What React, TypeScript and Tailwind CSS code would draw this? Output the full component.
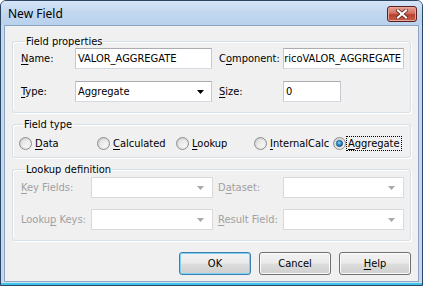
import React from "react";

const F = "font-['DejaVu_Sans_Condensed','DejaVu_Sans',sans-serif] text-[11px] leading-[13px]";

function U({ children }: { children: React.ReactNode }) {
  return <span className="underline decoration-1 underline-offset-[2px]">{children}</span>;
}

function Label({ children, w, dis }: { children: React.ReactNode; w: string; dis?: boolean }) {
  return (
    <div className={`${w} shrink-0 flex items-center h-full ${dis ? "text-[#a0a0a0]" : "text-black"}`}>{children}</div>
  );
}

const boxBorder = "border border-[#abadb3] border-l-[#c4c8d0] border-r-[#c4c8d0] border-b-[#d5d9e0] bg-white";

function Arrow({ dis }: { dis?: boolean }) {
  return (
    <svg width="7" height="4" viewBox="0 0 7 4" className="shrink-0">
      <path d="M0 0 H7 L3.5 4 Z" fill={dis ? "#a9a9a9" : "#000"} />
    </svg>
  );
}

function Radio({ checked, id }: { checked?: boolean; id: string }) {
  return (
    <svg width="13" height="13" viewBox="0 0 13 13" className="shrink-0">
      <defs>
        <linearGradient id={`o${id}`} x1="0" y1="0" x2="1" y2="1">
          <stop offset="0" stopColor="#c9c9c9" />
          <stop offset="1" stopColor="#f6f6f6" />
        </linearGradient>
        <linearGradient id={`i${id}`} x1="0" y1="0" x2="1" y2="1">
          <stop offset="0" stopColor="#e0e0e0" />
          <stop offset="1" stopColor="#fbfbfb" />
        </linearGradient>
        <radialGradient id={`d${id}`} cx="0.45" cy="0.4" r="0.6">
          <stop offset="0" stopColor="#8fdcff" />
          <stop offset="0.5" stopColor="#2b8fd0" />
          <stop offset="1" stopColor="#1a4d78" />
        </radialGradient>
      </defs>
      <circle cx="6.5" cy="6.5" r="6" fill={`url(#o${id})`} stroke="#8e8f8f" strokeWidth="1" />
      <circle cx="6.5" cy="6.5" r="4" fill={`url(#i${id})`} />
      {checked && <circle cx="6.5" cy="6.5" r="3.2" fill={`url(#d${id})`} stroke="#1d4f7c" strokeWidth="0.6" />}
    </svg>
  );
}

function Btn({ children, def }: { children: React.ReactNode; def?: boolean }) {
  return (
    <div
      className={`w-[72px] h-[23px] rounded-[3px] border flex items-center justify-center text-black bg-[linear-gradient(#f2f2f2_0%,#ebebeb_48%,#dddddd_52%,#cfcfcf_100%)] ${
        def ? "border-[#3c7fb1] shadow-[inset_0_0_0_1px_#7fd0f2]" : "border-[#707070] shadow-[inset_0_0_0_1px_#fbfbfb]"
      }`}
    >
      {children}
    </div>
  );
}

function Group({ title, children, cls }: { title: string; children: React.ReactNode; cls: string }) {
  return (
    <fieldset className={`border border-[#d5dfe5] rounded-[3px] shadow-[inset_1px_1px_0_#ffffff,1px_1px_0_#ffffff] ${cls}`}>
      <legend className="ml-[4px] px-[1px] h-[13px] leading-[13px] text-black">{title}</legend>
      {children}
    </fieldset>
  );
}

export default function App() {
  return (
    <div className={`w-[423px] h-[286px] flex flex-col border border-[#2b4563] rounded-t-[6px] bg-[#c4d8ef] overflow-hidden ${F}`}>
      {/* title bar */}
      <div className="h-[24px] shrink-0 flex items-center pl-[7px] pr-[5px] bg-[linear-gradient(#d6e5f6_0%,#c3d8f0_45%,#b9d1ed_100%)]">
        <div className="font-['Noto_Sans',sans-serif] text-[12px] leading-[16px] text-black pt-[2px]">New Field</div>
        <div className="ml-auto w-[30px] h-[16px] mt-[2px] rounded-[3px] border border-[#5b1f1f] flex items-center justify-center bg-[linear-gradient(#e8a093_0%,#d0705f_45%,#b8402e_55%,#c9604a_100%)] shadow-[inset_0_0_0_1px_#e7a598]">
          <svg width="12" height="10" viewBox="0 0 12 10">
            <path d="M2 1.5 L10 8.5 M10 1.5 L2 8.5" stroke="#5a1a12" strokeWidth="3.6" strokeLinecap="square" />
            <path d="M2 1.5 L10 8.5 M10 1.5 L2 8.5" stroke="#ffffff" strokeWidth="2.2" strokeLinecap="square" />
          </svg>
        </div>
      </div>
      {/* client */}
      <div className="flex-1 mx-[3px] border border-[#8ba4c3] bg-[#f0f0f0] flex flex-col px-[7px] pt-[9px]">
        <Group title="Field properties" cls="pl-[8px] pb-[10px]">
          <div className="flex h-[21px]">
            <Label w="w-[54px]">
              <span><U>N</U>ame:</span>
            </Label>
            <div className={`w-[137px] h-[21px] ${boxBorder} flex items-center pl-[2px]`}>VALOR_AGGREGATE</div>
            <div className="w-[7px]" />
            <Label w="w-[64px]">
              <span>C<U>o</U>mponent:</span>
            </Label>
            <div className={`w-[121px] h-[21px] ${boxBorder} flex items-center justify-end pr-[2px] overflow-hidden whitespace-nowrap`}>ricoVALOR_AGGREGATE</div>
          </div>
          <div className="flex h-[21px] mt-[12px]">
            <Label w="w-[54px]">
              <span><U>T</U>ype:</span>
            </Label>
            <div className={`w-[137px] h-[21px] ${boxBorder} flex items-center pl-[2px] pr-[7px]`}>
              <span>Aggregate</span>
              <span className="ml-auto"><Arrow /></span>
            </div>
            <div className="w-[7px]" />
            <Label w="w-[64px]">
              <span><U>S</U>ize:</span>
            </Label>
            <div className={`w-[58px] h-[21px] ${boxBorder} flex items-center pl-[2px]`}>0</div>
          </div>
        </Group>

        <Group title="Field type" cls="mt-[5px] pl-[6px] pt-[5px] pb-[6px]">
          <div className="flex h-[15px] items-center">
            <div className="w-[78px] flex items-center gap-[3px]"><Radio id="a" /><span><U>D</U>ata</span></div>
            <div className="w-[79px] flex items-center gap-[3px]"><Radio id="b" /><span><U>C</U>alculated</span></div>
            <div className="w-[78px] flex items-center gap-[3px]"><Radio id="c" /><span><U>L</U>ookup</span></div>
            <div className="w-[79px] flex items-center gap-[3px]"><Radio id="d" /><span><U>I</U>nternalCalc</span></div>
            <div className="flex items-center gap-[1px]">
              <Radio id="e" checked />
              <span className="outline outline-1 outline-dotted outline-black px-[1px]"><U>A</U>ggregate</span>
            </div>
          </div>
        </Group>

        <Group title="Lookup definition" cls="mt-[5px] pl-[8px] pt-[1px] pb-[10px]">
          <div className="flex h-[21px]">
            <Label w="w-[70px]" dis>
              <span><U>K</U>ey Fields:</span>
            </Label>
            <div className={`w-[122px] h-[21px] border border-[#d9d9d9] bg-white flex items-center justify-end pr-[8px]`}>
              <Arrow dis />
            </div>
            <div className="w-[5px]" />
            <Label w="w-[65px]" dis>
              <span>D<U>a</U>taset:</span>
            </Label>
            <div className={`w-[121px] h-[21px] border border-[#d9d9d9] bg-white flex items-center justify-end pr-[8px]`}>
              <Arrow dis />
            </div>
          </div>
          <div className="flex h-[21px] mt-[11px]">
            <Label w="w-[70px]" dis>
              <span>Looku<U>p</U> Keys:</span>
            </Label>
            <div className={`w-[122px] h-[21px] border border-[#d9d9d9] bg-white flex items-center justify-end pr-[8px]`}>
              <Arrow dis />
            </div>
            <div className="w-[5px]" />
            <Label w="w-[65px]" dis>
              <span><U>R</U>esult Field:</span>
            </Label>
            <div className={`w-[121px] h-[21px] border border-[#d9d9d9] bg-white flex items-center justify-end pr-[8px]`}>
              <Arrow dis />
            </div>
          </div>
        </Group>

        <div className="flex justify-end gap-[8px] mt-[11px]">
          <Btn def>OK</Btn>
          <Btn>Cancel</Btn>
          <Btn><span><U>H</U>elp</span></Btn>
        </div>
      </div>
      <div className="h-[1px] shrink-0 bg-[#cfe3f3]" />
      <div className="h-[2px] shrink-0 bg-[#3cc3ea]" />
    </div>
  );
}
